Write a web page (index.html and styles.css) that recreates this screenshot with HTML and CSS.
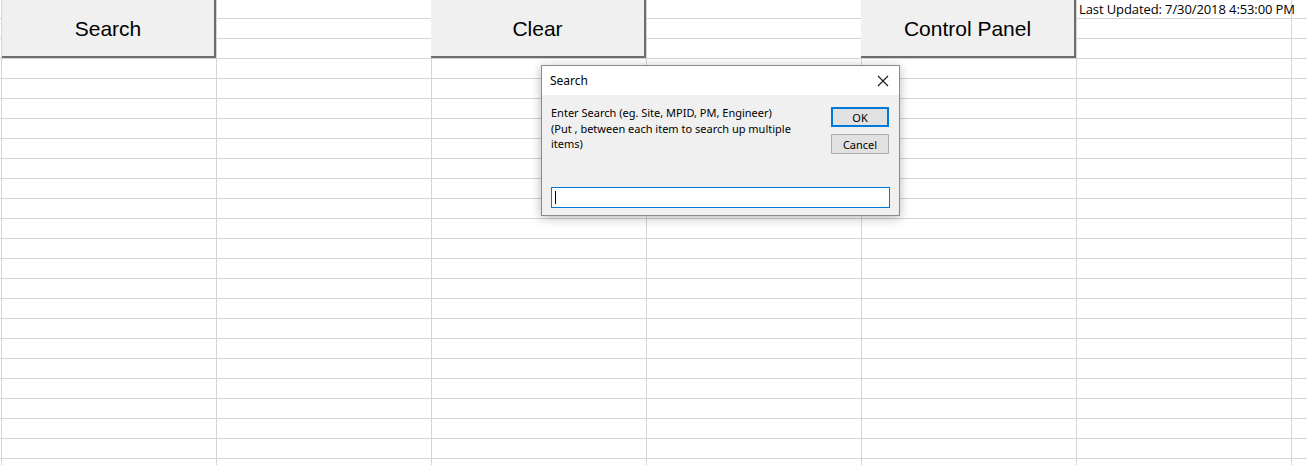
FILE: index.html
```html
<!DOCTYPE html>
<html>
<head>
<meta charset="utf-8">
<link rel="stylesheet" href="styles.css">
</head>
<body>
<div class="sheet">
  <div class="toolbar">
    <button class="shape-btn first">Search</button>
    <div class="cell"></div>
    <button class="shape-btn">Clear</button>
    <div class="cell"></div>
    <button class="shape-btn">Control Panel</button>
    <div class="updated">Last Updated: 7/30/2018 4:53:00 PM</div>
  </div>

  <div class="dialog">
    <div class="dialog-title">
      <span>Search</span>
      <svg class="close" width="12" height="12" viewBox="0 0 12 12"><path d="M1 1 L11 11 M11 1 L1 11" stroke="#1a1a1a" stroke-width="1.1" fill="none"/></svg>
    </div>
    <div class="dialog-body">
      <div class="prompt-row">
        <div class="prompt">Enter Search (eg. Site, MPID, PM, Engineer)<br>(Put , between each item to search up multiple items)</div>
        <div class="actions">
          <button class="dlg-btn default">OK</button>
          <button class="dlg-btn">Cancel</button>
        </div>
      </div>
      <div class="input"><span class="caret"></span></div>
    </div>
  </div>
</div>
</body>
</html>
```
FILE: styles.css
```css
html, body {
  margin: 0;
  padding: 0;
  background: #ffffff;
  overflow: hidden;
}
.sheet {
  position: relative;
  width: 1307px;
  height: 465px;
  background-color: #ffffff;
  background-image:
    repeating-linear-gradient(to right, #d4d4d4 0, #d4d4d4 1px, transparent 1px, transparent 215px),
    repeating-linear-gradient(to bottom, transparent 0, transparent 18px, #d4d4d4 18px, #d4d4d4 19px, transparent 19px, transparent 20px);
  background-position: 1px 0, 0 0;
  background-size: 1307px 465px, 1307px 20px;
  background-repeat: no-repeat, repeat-y;
  font-family: "Liberation Sans", Arial, sans-serif;
}
.toolbar {
  display: grid;
  grid-template-columns: 215px 215px 215px 215px 215px 231px;
  padding-left: 1px;
  height: 58px;
}
.shape-btn {
  margin: 0;
  width: 215px;
  height: 58px;
  box-sizing: border-box;
  background: #f0f0f0;
  border: none;
  border-right: 2px solid #6d6d6d;
  border-bottom: 2px solid #6d6d6d;
  font-family: "Liberation Sans", Arial, sans-serif;
  font-size: 21px;
  color: #000;
  padding: 2px 0 0 0;
}
.shape-btn.first {
  margin-left: 1px;
  width: 214px;
}
.updated {
  font-family: "Open Sans", "Noto Sans", sans-serif;
  font-size: 13px;
  letter-spacing: -0.1px;
  color: #000;
  padding: 0 0 0 3px;
  line-height: 18px;
  white-space: nowrap;
}
.dialog {
  position: absolute;
  left: 541px;
  top: 65px;
  width: 359px;
  height: 151px;
  box-sizing: border-box;
  border: 1px solid #8a8a8a;
  background: #f0f0f0;
  box-shadow: 0 2px 10px rgba(0,0,0,0.28);
  font-family: "Noto Sans", "Open Sans", sans-serif;
  display: flex;
  flex-direction: column;
}
.dialog-title {
  height: 29px;
  background: #ffffff;
  display: flex;
  align-items: center;
  justify-content: space-between;
  padding: 0 10px 0 8px;
  font-size: 12px;
  color: #000;
}
.close {
  display: block;
}
.dialog-body {
  flex: 1;
  padding: 10px 9px 0 9px;
  display: flex;
  flex-direction: column;
}
.prompt-row {
  display: flex;
  justify-content: space-between;
  height: 82px;
}
.prompt {
  width: 258px;
  font-size: 11px;
  line-height: 15.5px;
  color: #000;
}
.actions {
  display: flex;
  flex-direction: column;
  gap: 7px;
  padding-top: 2px;
  padding-right: 1px;
}
.dlg-btn {
  width: 58px;
  height: 20px;
  margin: 0;
  padding: 0;
  box-sizing: border-box;
  background: #e1e1e1;
  border: 1px solid #adadad;
  font-family: "Noto Sans", "Open Sans", sans-serif;
  font-size: 11px;
  color: #000;
}
.dlg-btn.default {
  border: 2px solid #0078d7;
}
.input {
  height: 21px;
  box-sizing: border-box;
  background: #ffffff;
  border: 1px solid #0078d7;
  margin-right: 0;
  display: flex;
  align-items: center;
  padding-left: 3px;
}
.caret {
  width: 1px;
  height: 13px;
  background: #000;
}
```
